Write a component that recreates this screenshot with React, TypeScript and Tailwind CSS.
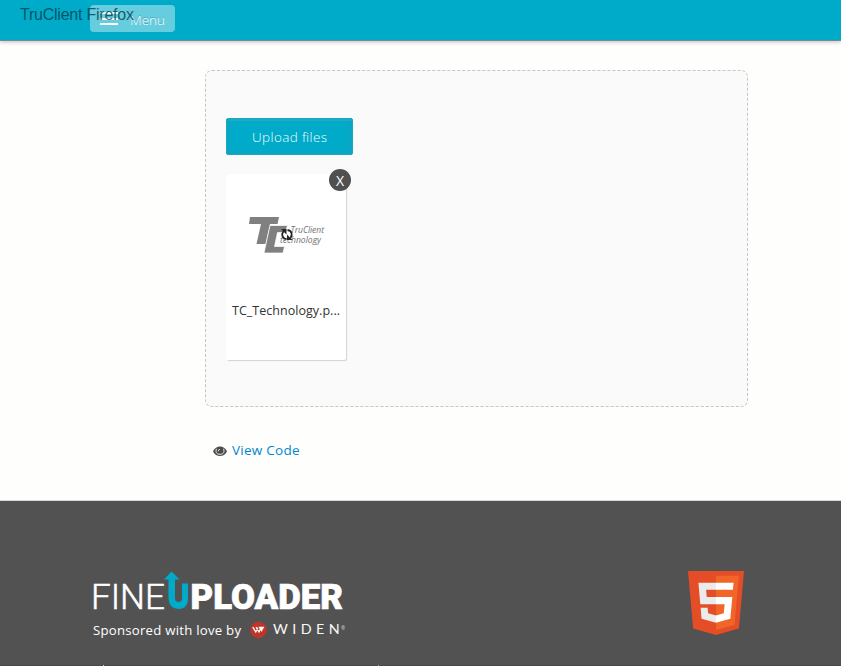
function MenuBar() {
  return (
    <header className="h-[41px] border-b border-[#6b8e99] bg-[#00abc9] shadow-[0_1px_4px_rgba(0,0,0,0.25)]">
      <div className="relative flex pt-[5px] pl-[90px]">
        <button className="flex h-[27px] w-[85px] items-center rounded-[4px] bg-[#66cddf] pl-[10px]">
          <span className="flex h-[13px] w-[18px] flex-col justify-between">
            <i className="h-[2px] bg-white" />
            <i className="h-[2px] bg-white" />
            <i className="h-[2px] bg-white" />
          </span>
          <svg className="ml-[12px] h-[20px] w-[36px] overflow-visible">
            <text x="0" y="16" textLength="35" fill="#fff" fontSize="13.500" fontWeight="350" style={{ textShadow: "0 -1px 0 rgba(0,0,0,.25)" }}>Menu</text>
          </svg>
        </button>
        <svg className="absolute top-0 left-[20px] h-[26px] w-[120px] overflow-visible">
          <text x="0" y="20" textLength="114" fill="#003d4c" fillOpacity=".8" fontSize="16" fontFamily="Liberation Sans, Arial, sans-serif">TruClient Firefox</text>
        </svg>
      </div>
    </header>
  );
}

function Thumbnail() {
  return (
    <svg width="80" height="40" viewBox="247 215 80 40" className="mt-[40px] ml-[21px]">
      <path fill="#808080" d="M250 217h29l-1.500 7H270l-4.500 20h-9l4.500-20h-12z" />
      <path fill="#808080" stroke="#fff" strokeWidth=".7" d="M270 225.500h17.500l-2 7h-8l-3 14h10l-1.500 6.500h-19z" />
      <g fill="#707070" fontSize="8.500" fontStyle="italic" fontFamily="Open Sans, sans-serif">
        <text x="290.500" y="233" textLength="33.500">TruClient</text>
        <text x="280" y="242.500" textLength="41">technology</text>
      </g>
      <g fill="none" stroke="#242424" strokeWidth="1.800">
        <path d="M286.500 239.200c-4.500-.7-5.300-5-3-8M287.500 230c4.500.5 5.200 5 3 8" />
      </g>
      <path fill="#242424" d="M281 229h5.500v5.500zM292.500 240H287v-5.500z" />
    </svg>
  );
}

function Uploader() {
  return (
    <section className="ml-[205px] h-[337px] w-[543px] rounded-[7px] border border-dashed border-[#c6c6c6] bg-[#fafafa] pt-[47px] pl-[20px]">
      <button className="flex h-[37px] w-[127px] items-center justify-center rounded-[2px] border border-[#14a9c4] bg-[#00abc9] shadow-[inset_0_0_5px_1px_#16a0bd,inset_0_2px_0_#27b5ce]">
        <svg className="h-[20px] w-[75px] overflow-visible">
          <text x="0" y="15" textLength="75" fill="#effdff" fontSize="13.500" fontWeight="350">Upload files</text>
        </svg>
      </button>
      <article className="relative mt-[19px] h-[186px] w-[120px] rounded-[2px] bg-white pt-px shadow-[1px_1px_1px_#d2d2d2]">
        <Thumbnail />
        <svg className="mt-[47px] ml-[6px] h-[20px] w-[110px] overflow-visible">
          <text x="0" y="13" textLength="108" fill="#333" fontSize="12.500" fontWeight="370">TC_Technology.p...</text>
        </svg>
        <button className="absolute -top-[5px] left-[103px] flex size-[22px] items-center justify-center rounded-full bg-[#505050] pt-px text-[14px] leading-none text-white">X</button>
      </article>
    </section>
  );
}

function ViewCode() {
  return (
    <a className="mt-[34px] ml-[213px] flex h-[20px] items-center gap-[5px]">
      <svg width="14" height="12" viewBox="0 0 14 12">
        <path fill="#4c4c4c" d="M0 6.500C3-.2 11-.2 14 6.500 11 12.500 3 12.500 0 6.500" />
        <path fill="none" stroke="#f0f0ee" strokeWidth=".9" d="M3.500 3.800C2 7.500 4 9.300 7 9.300s5-1.800 3.500-5.500" />
        <path fill="none" stroke="#e5e5e5" strokeWidth=".9" d="M5.300 6.200q0-1.800 1.700-1.800" />
      </svg>
      <svg className="h-[20px] w-[70px] overflow-visible">
        <text x="0" y="14" textLength="67.500" fill="#0088cc" fontSize="13.500" fontWeight="370">View Code</text>
      </svg>
    </a>
  );
}

function FineUploaderLogo() {
  return (
    <svg width="252" height="40" viewBox="92 570 252 40" className="block overflow-visible">
      <text x="91" y="608.500" fill="#fff" stroke="#fff" strokeWidth=".5" fontSize="35.500" fontWeight="300" fontFamily="Roboto, sans-serif" textLength="74" lengthAdjust="spacingAndGlyphs">FINE</text>
      <path fill="#00abc9" d="M164 579.500l7.500-8 8 8h-4.500v18.500q0 4 3.500 4t3.500-4v-14.500h6V598q0 11-9.500 11t-10-11v-18.500z" />
      <text x="190.500" y="608.500" fill="#fff" stroke="#fff" strokeWidth=".7" fontSize="35" fontWeight="900" fontFamily="Roboto, sans-serif" textLength="152.500" lengthAdjust="spacingAndGlyphs">PLOADER</text>
    </svg>
  );
}

function Html5Logo() {
  return (
    <svg width="56" height="64" viewBox="30 0 451 512" preserveAspectRatio="none">
      <path fill="#e44d26" d="M71 460L30 0h451l-41 460-185 52" />
      <path fill="#f16529" d="M256 472l149-41 35-394H256" />
      <path fill="#ebebeb" d="M256 208h-75l-5-58h80V94H114l15 171h127zM256 355l-64-17-4-45h-56l7 89 117 32z" />
      <path fill="#fff" d="M255 208v57h70l-7 73-63 17v59l116-32 16-174zM255 94v56h137l5-56z" />
    </svg>
  );
}

function Footer() {
  return (
    <footer className="mt-[39px] h-[166px] border-t border-b border-t-[#d6d6d6] border-b-[#484848] bg-[#525252] pt-[69px]">
      <div className="flex h-[94px] justify-between pr-[97px] pl-[92px]">
        <div>
          <FineUploaderLogo />
          <div className="mt-[9px] flex items-center">
            <svg className="ml-px h-[22px] w-[150px] overflow-visible">
              <text x="0" y="16" textLength="148" fill="#fff" fontSize="13.200" fontWeight="370">Sponsored with love by</text>
            </svg>
            <svg width="104" height="20" viewBox="247 619 104 20" className="ml-[4px] overflow-visible">
              <circle cx="258.500" cy="629" r="8.200" fill="#bf3529" />
              <path fill="none" stroke="#fff" strokeWidth="1.300" d="M252.800 626.200l3 4.800 2-4.300M256 626.200l3 4.800 2-4.300" />
              <path fill="#fff" d="M258.500 625.700h5.800l-2.800 5.300z" />
              <text x="273" y="633" fill="#f8f8f8" fontSize="13" fontFamily="Lato, sans-serif" letterSpacing="4" textLength="71" lengthAdjust="spacingAndGlyphs">WIDEN</text>
              <text x="341" y="629" fill="#ddd" fontSize="5">®</text>
            </svg>
          </div>
        </div>
        <div className="pt-px"><Html5Logo /></div>
      </div>
      <div className="flex justify-between pr-[462px] pl-[103px]">
        <i className="mt-px h-px w-px bg-[#b5dbe1]" />
        <i className="mt-px h-px w-px bg-[#78bccd]" />
      </div>
    </footer>
  );
}

export default function App() {
  return (
    <div className="h-[666px] overflow-hidden bg-white font-['Open_Sans','Noto_Sans',sans-serif]">
      <main className="h-full w-[841px] overflow-hidden bg-[#fefefc]">
        <MenuBar />
        <div className="pt-[29px]">
          <Uploader />
          <ViewCode />
          <Footer />
        </div>
      </main>
    </div>
  );
}
